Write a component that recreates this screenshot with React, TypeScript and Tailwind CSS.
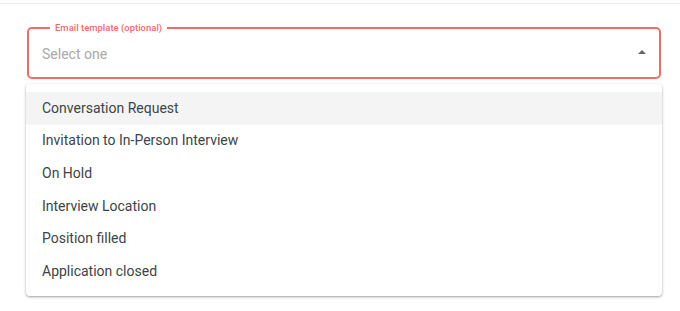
import React from 'react'

const options = [
  'Conversation Request',
  'Invitation to In-Person Interview',
  'On Hold',
  'Interview Location',
  'Position filled',
  'Application closed',
]

export default function App() {
  return (
    <div className="relative w-[680px] h-[311px] overflow-hidden bg-white font-['Roboto',sans-serif]">
      <div className="h-[4px] border-b border-[#ececec]" />
      <div className="pl-[27px] pr-[19px] pt-[18px] flex flex-col gap-[12px]">
        <fieldset className="h-[57px] border-2 border-[#f26a6a] rounded-[5px] pl-[13px] pr-[13px] pt-[10px]">
          <legend className="ml-[8px] px-[5px] text-[9.5px] leading-[12px] font-medium text-[#f26a6a]">
            Email template (optional)
          </legend>
          <div className="flex items-center justify-between h-[20px]">
            <span className="text-[14px] leading-[20px] text-[#a9a9a9]">Select one</span>
            <svg width="8" height="4" viewBox="0 0 8 4" className="mt-[-4px]">
              <path d="M0 4 L4 0 L8 4 Z" fill="#666" />
            </svg>
          </div>
        </fieldset>
        <div className="h-[80px] border border-[#d6d6d6] rounded-[4px] -ml-[1px]" />
      </div>

      <div className="absolute left-[26px] top-[84px] w-[636px] bg-white rounded-[4px] py-[8px] shadow-[0_1px_3px_rgba(0,0,0,0.3),0_1px_1px_rgba(0,0,0,0.1)]">
        {options.map((o, i) => (
          <div
            key={o}
            className={`h-[32.6px] flex items-center px-[16px] text-[14px] text-[#3d4448] ${i === 0 ? 'bg-[#f4f4f4]' : ''}`}
          >
            {o}
          </div>
        ))}
      </div>
    </div>
  )
}
